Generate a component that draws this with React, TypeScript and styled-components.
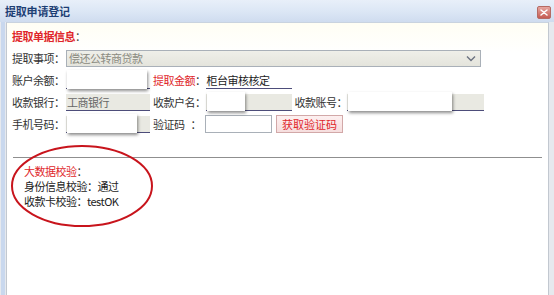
import React from "react";
import styled, { createGlobalStyle } from "styled-components";

const Global = createGlobalStyle`
  html, body { margin: 0; padding: 0; background: #fff; }
  body { font-family: "Noto Sans CJK SC", "Noto Sans", sans-serif; font-size: 11px; letter-spacing: -0.5px; color: #333; }
`;

const Window = styled.div`
  position: relative;
  width: 554px;
  height: 295px;
  box-sizing: border-box;
  display: flex;
  flex-direction: column;
  background: linear-gradient(to right, #e6e9ee 0 1px, #c9d8ee 1px 5px, #e6e9ee 5px);
  overflow: hidden;
`;

const TitleBar = styled.div`
  height: 22px;
  flex: none;
  display: flex;
  align-items: center;
  justify-content: space-between;
  padding: 0 3px 0 5px;
  background: linear-gradient(to bottom, #e8eff9 0%, #dbe6f5 55%, #cfdcef 100%);
`;

const Title = styled.span`
  color: #1e3f74;
  font-size: 11px;
  font-weight: 600;
  letter-spacing: -0.2px;
`;

const CloseButton = styled.div`
  width: 12px;
  height: 11px;
  margin-top: 2px;
  border-radius: 2px;
  background: linear-gradient(to bottom, #e6a6a0, #c55b52);
  border: 1px solid #b56a63;
  display: flex;
  align-items: center;
  justify-content: center;
`;

const Body = styled.div`
  flex: 1;
  margin: 0 5px 0 6px;
  background: linear-gradient(to bottom, #fffef4 0px, #ffffff 30px);
  border-left: 1px solid #c2c8d0;
  border-right: 1px solid #c2c8d0;
  border-top: 1px solid #c9d3df;
  padding: 5px 0 0 5px;
  display: flex;
  flex-direction: column;
`;

const SectionHeader = styled.div`
  height: 17px;
  line-height: 17px;
  font-weight: 700;
  color: #e0262a;
  margin-bottom: 2px;
  span { color: #444; font-weight: 400; }
`;

const Row = styled.div`
  display: flex;
  align-items: center;
  height: 22px;
`;

const Label = styled.span<{ $w?: number; $red?: boolean }>`
  min-width: ${(p) => p.$w ?? 54}px;
  flex: none;
  white-space: pre;
  color: ${(p) => (p.$red ? "#e0262a" : "#333")};
  b { color: #333; font-weight: 400; }
`;

const Select = styled.div`
  width: 415px;
  height: 17px;
  box-sizing: border-box;
  border: 1px solid #a9b0b8;
  background: linear-gradient(to bottom, #efefe9, #e4e4dc);
  color: #8a8a80;
  display: flex;
  align-items: center;
  justify-content: space-between;
  padding: 0 4px 0 2px;
`;

const Field = styled.div<{ $w: number; $bg?: string; $color?: string }>`
  position: relative;
  width: ${(p) => p.$w}px;
  height: 17px;
  box-sizing: border-box;
  flex: none;
  background: ${(p) => p.$bg ?? "#e9e9e2"};
  border-bottom: 1px solid #4d4d7a;
  color: ${(p) => p.$color ?? "#666"};
  line-height: 16px;
  padding-left: 1px;
  margin-right: 3px;
`;

const Mask = styled.div<{ $w: number }>`
  position: absolute;
  left: 1px;
  top: -2px;
  width: ${(p) => p.$w}px;
  height: 19px;
  background: #fff;
  box-shadow: 1px 2px 3px rgba(0, 0, 0, 0.45);
`;

const TextInput = styled.div<{ $w: number }>`
  width: ${(p) => p.$w}px;
  height: 18px;
  box-sizing: border-box;
  flex: none;
  border: 1px solid #a9b0b8;
  background: #fff;
  margin-right: 4px;
`;

const CodeButton = styled.button`
  width: 67px;
  height: 18px;
  box-sizing: border-box;
  padding: 0;
  border: 1px solid #d2a8a8;
  background: linear-gradient(to bottom, #fdf0f0, #f6dede);
  color: #e0262a;
  font-family: inherit;
  font-size: 11px;
  letter-spacing: 0;
  line-height: 16px;
`;

const Divider = styled.div`
  height: 1px;
  margin: 22px 0 0 1px;
  width: 529px;
  background: #8f8f8f;
`;

const CheckBlock = styled.div`
  padding: 6px 0 0 12px;
  color: #222;
`;

const CheckLine = styled.div`
  height: 15px;
  line-height: 15px;
`;

const CheckTitle = styled(CheckLine)`
  color: #e0262a;
  span { color: #333; }
`;

const Annotation = styled.svg`
  position: absolute;
  left: 10px;
  top: 143px;
  pointer-events: none;
`;

export default function App() {
  return (
    <>
      <Global />
      <Window>
        <TitleBar>
          <Title>提取申请登记</Title>
          <CloseButton>
            <svg width="8" height="7" viewBox="0 0 8 7">
              <path d="M1 1 L7 6 M7 1 L1 6" stroke="#fff" strokeWidth="1.5" strokeLinecap="round" />
            </svg>
          </CloseButton>
        </TitleBar>
        <Body>
          <SectionHeader>
            提取单据信息<span>：</span>
          </SectionHeader>
          <Row>
            <Label>提取事项：</Label>
            <Select>
              <span>偿还公转商贷款</span>
              <svg width="10" height="7" viewBox="0 0 10 7">
                <path d="M1 1.5 L5 5.5 L9 1.5" stroke="#6b7280" strokeWidth="1.4" fill="none" />
              </svg>
            </Select>
          </Row>
          <Row>
            <Label>账户余额：</Label>
            <Field $w={84} $bg="#fff">
              <Mask $w={80} />
            </Field>
            <Label $w={52} $red>
              提取金额<b>：</b>
            </Label>
            <Field $w={86} $bg="#fff" $color="#222">
              柜台审核核定
            </Field>
          </Row>
          <Row>
            <Label>收款银行：</Label>
            <Field $w={84}>工商银行</Field>
            <Label $w={52}>收款户名：</Label>
            <Field $w={86}>
              <Mask $w={38} />
            </Field>
            <Label $w={52}>收款账号：</Label>
            <Field $w={137}>
              <Mask $w={104} />
            </Field>
          </Row>
          <Row>
            <Label>手机号码：</Label>
            <Field $w={84}>
              <Mask $w={70} />
            </Field>
            <Label $w={52}>{"验证码   ："}</Label>
            <TextInput $w={67} />
            <CodeButton>获取验证码</CodeButton>
          </Row>
          <Divider />
          <CheckBlock>
            <CheckTitle>
              大数据校验<span>：</span>
            </CheckTitle>
            <CheckLine>身份信息校验：通过</CheckLine>
            <CheckLine>收款卡校验：testOK</CheckLine>
          </CheckBlock>
        </Body>
        <Annotation width="146" height="86" viewBox="0 0 146 86">
          <ellipse cx="72" cy="43" rx="70" ry="40" fill="none" stroke="#c8141c" strokeWidth="2" />
        </Annotation>
      </Window>
    </>
  );
}
